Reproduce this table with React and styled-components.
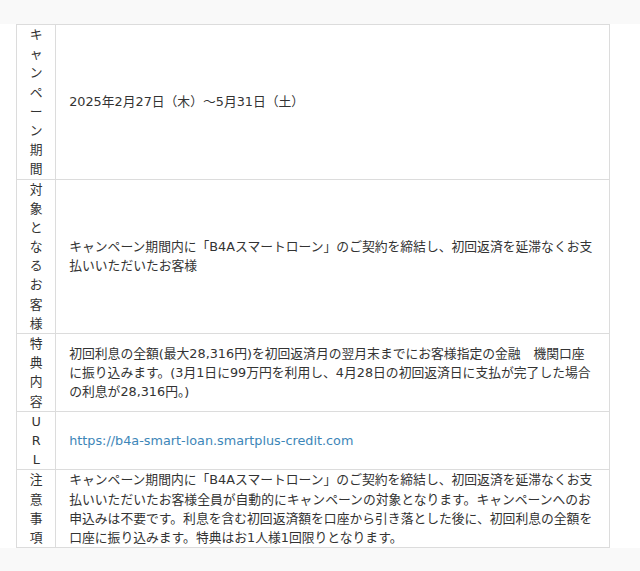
import styled, { createGlobalStyle } from "styled-components";

const GlobalStyle = createGlobalStyle`
  body {
    margin: 0;
    background: #f9f9f9;
    font-family: "DejaVu Sans", "Noto Sans CJK JP", sans-serif;
    color: #333;
  }
`;

const Section = styled.section`
  margin-top: 24px;
  background: #fff;
  padding: 0 30px 0 16px;
`;

const Table = styled.table`
  width: 100%;
  border-collapse: collapse;
  font-size: 12.8px;
  line-height: 1.5;
`;

const Head = styled.th`
  width: 12.8px;
  padding: 0 12.8px;
  border: 1px solid #dcdcdc;
  font-weight: normal;
  text-align: center;
  vertical-align: middle;
  word-break: break-all;
`;

const Cell = styled.td`
  padding: 0 12.8px;
  border: 1px solid #dcdcdc;
  vertical-align: middle;
`;

const Link = styled.a`
  color: #3d86b8;
  text-decoration: none;
`;

const rows = [
  { label: "キャンペーン期間", body: "2025年2月27日（木）～5月31日（土）" },
  {
    label: "対象となるお客様",
    body: "キャンペーン期間内に「B4Aスマートローン」のご契約を締結し、初回返済を延滞なくお支払いいただいたお客様",
  },
  {
    label: "特典内容",
    body: "初回利息の全額(最大28,316円)を初回返済月の翌月末までにお客様指定の金融　機関口座に振り込みます。(3月1日に99万円を利用し、4月28日の初回返済日に支払が完了した場合の利息が28,316円。)",
  },
  {
    label: "URL",
    body: (
      <Link href="#">https://b4a-smart-loan.smartplus-credit.com</Link>
    ),
  },
  {
    label: "注意事項",
    body: "キャンペーン期間内に「B4Aスマートローン」のご契約を締結し、初回返済を延滞なくお支払いいただいたお客様全員が自動的にキャンペーンの対象となります。キャンペーンへのお申込みは不要です。利息を含む初回返済額を口座から引き落とした後に、初回利息の全額を口座に振り込みます。特典はお1人様1回限りとなります。",
  },
];

const App = () => (
  <>
    <GlobalStyle />
    <Section>
      <Table>
        <tbody>
          {rows.map(({ label, body }) => (
            <tr key={label}>
              <Head>{label}</Head>
              <Cell>{body}</Cell>
            </tr>
          ))}
        </tbody>
      </Table>
    </Section>
  </>
);

export default App;
